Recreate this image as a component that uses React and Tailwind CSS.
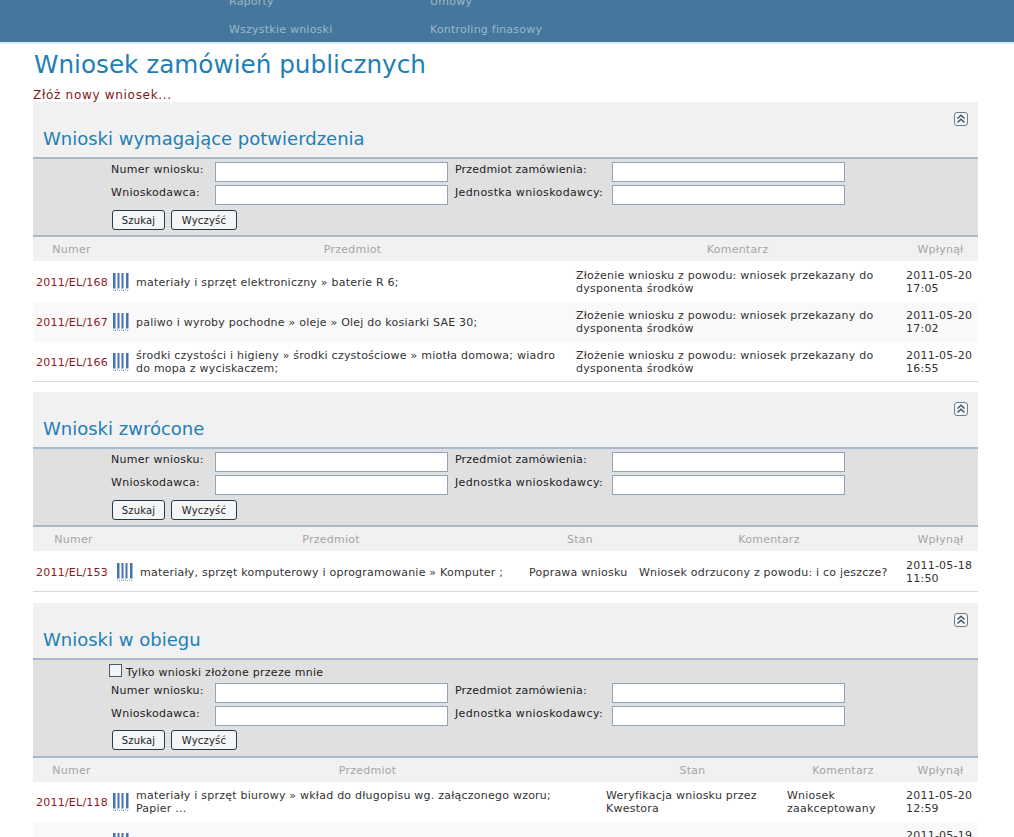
const FONT = "font-['DejaVu_Sans','Liberation_Sans',sans-serif]";

function Barcode() {
  return (
    <svg width="18" height="19" viewBox="0 0 18 19" className="block">
      <g fill="#4473b8">
        <rect x="1" y="0" width="2.5" height="15.5" />
        <rect x="5.5" y="0" width="2" height="15.5" />
        <rect x="9.5" y="0" width="2" height="15.5" />
        <rect x="14" y="0" width="2.5" height="15.5" />
      </g>
      <path d="M1 17h1M3 17.5h1M5 17h1M7 17.5h1M9 17h1M11 17.5h1M13 17h1M15 17.5h1" stroke="#6f8db8" strokeWidth="1" />
    </svg>
  );
}

function CollapseIcon() {
  return (
    <svg width="14" height="14" viewBox="0 0 14 14" className="block">
      <rect x="0.5" y="0.5" width="13" height="13" rx="2.5" fill="#f4f6f8" stroke="#6b7d8f" />
      <path d="M3.5 6.5 7 3.2l3.5 3.3M3.5 10.5 7 7.2l3.5 3.3" fill="none" stroke="#3e5064" strokeWidth="1.4" />
    </svg>
  );
}

const LABEL = "text-[11px] leading-[14px] text-[#222] whitespace-nowrap pt-px";
const INPUT = "h-[20px] w-[233px] bg-white border border-[#8ea4bd]";

function Filters({ check }) {
  return (
    <div className="bg-[#e0e0e1] border-t-2 border-b-2 border-[#a9bacd] pl-[78px]">
      {check && (
        <div className="flex items-center h-[20px] mt-[2px] text-[11px] leading-[14px] tracking-[0.28px] text-[#222] pt-px -ml-[2px]">
          <span className="w-[13px] h-[13px] border border-[#4a5b6c] bg-[#f2f4f6] mr-[4px] -mt-[4px]" />
          Tylko wnioski złożone przeze mnie
        </div>
      )}
      <div className={`grid grid-cols-[104px_233px_164px_233px] gap-y-[3px] ${check ? "mt-px" : "mt-[3px]"}`}>
        <span className={`${LABEL} tracking-[0.28px]`}>Numer wniosku:</span>
        <input className={INPUT} />
        <span className={`${LABEL} pl-[7px] tracking-[0.18px]`}>Przedmiot zamówienia:</span>
        <input className={INPUT} />
        <span className={`${LABEL} tracking-[0.28px]`}>Wnioskodawca:</span>
        <input className={INPUT} />
        <span className={`${LABEL} pl-[7px] tracking-[0.37px]`}>Jednostka wnioskodawcy:</span>
        <input className={INPUT} />
      </div>
      <div className={`flex gap-[6px] ml-[1px] ${check ? "mt-[4px] mb-[6px]" : "mt-[5px] mb-[5px]"}`}>
        <button className="w-[53px] h-[20px] rounded-[3px] border border-[#26384a] bg-[#f4f5f6] text-[10px] tracking-[0.2px] text-[#222]">Szukaj</button>
        <button className="w-[66px] h-[20px] rounded-[3px] border border-[#26384a] bg-[#f4f5f6] text-[10px] tracking-[0.2px] text-[#222]">Wyczyść</button>
      </div>
    </div>
  );
}

function Section({ title, check, grid, heads, rows, mb }) {
  return (
    <section className={`w-[945px] ml-[33px] ${mb}`}>
      <div className="h-[55px] bg-[#f1f1f2] relative">
        <div className="absolute right-[10px] top-[10px]"><CollapseIcon /></div>
        <h2 className="pt-[27px] pl-[10px] text-[18px] leading-[20px] text-[#1f7fb4]">{title}</h2>
      </div>
      <Filters check={check} />
      <div className={`grid ${grid} h-[24px] pt-[2px] items-center bg-[#f1f1f2] text-[11px] tracking-[0.23px] text-[#a5a5a5] text-center`}>
        {heads.map((h, i) => <span key={i}>{h}</span>)}
      </div>
      <div className={check ? "" : "pt-px"}>
        {rows.map((r, i) => (
          <div key={i} className={`grid ${grid} h-[40px] items-center text-[11px] leading-[13px] tracking-[0.23px] text-[#333] ${i % 2 ? "bg-[#f9f9f9]" : "bg-white"}`}>
            <span className="pl-[3px] text-[#8c1c1c]">{r[0]}</span>
            <span className="pl-[2px]"><Barcode /></span>
            {r.slice(1).map((c, j) => {
              const isDate = j === r.length - 2;
              return (
                <span key={j} className={j === 0 ? "pl-[3px] pr-[14px]" : isDate ? "pl-[3px]" : "pl-[4px] pr-[6px]"}>{c}</span>
              );
            })}
          </div>
        ))}
      </div>
      {mb !== "" && <div className="h-px bg-[#d8d9d9] -mt-px relative" />}
    </section>
  );
}

const FROM = "Złożenie wniosku z powodu: wniosek przekazany do dysponenta środków";

export default function App() {
  return (
    <div className={`h-[837px] overflow-hidden bg-white ${FONT}`}>
      <header className="h-[44px] bg-[#44779b] border-b-2 border-[#d9ecf7] overflow-hidden flex items-end">
        <nav className="ml-[229px] -mb-[2px] grid grid-cols-[201px_200px] auto-rows-[28px] items-center text-[11px] tracking-[0.23px] text-[#9db8cb]">
          <span>Raporty</span>
          <span>Umowy</span>
          <span>Wszystkie wnioski</span>
          <span>Kontroling finasowy</span>
        </nav>
      </header>
      <h1 className="ml-[34px] mt-[4px] text-[24.7px] leading-[34px] text-[#1f7fb4]">Wniosek zamówień publicznych</h1>
      <p className="ml-[33px] mt-[7px] text-[12px] leading-[13px] tracking-[0.7px] text-[#7f1717]">Złóż nowy wniosek...</p>
      <Section
        mb="mb-[10px]"
        title="Wnioski wymagające potwierdzenia"
        grid="grid-cols-[77px_23px_439px_331px_75px]"
        heads={["Numer", "", "Przedmiot", "Komentarz", "Wpłynął"]}
        rows={[
          ["2011/EL/168", "materiały i sprzęt elektroniczny » baterie R 6;", FROM, "2011-05-20 17:05"],
          ["2011/EL/167", "paliwo i wyroby pochodne » oleje » Olej do kosiarki SAE 30;", FROM, "2011-05-20 17:02"],
          ["2011/EL/166", "środki czystości i higieny » środki czystościowe » miotła domowa; wiadro do mopa z wyciskaczem;", FROM, "2011-05-20 16:55"],
        ]}
      />
      <Section
        mb="mb-[11px]"
        title="Wnioski zwrócone"
        grid="grid-cols-[81px_23px_388px_110px_268px_75px]"
        heads={["Numer", "", "Przedmiot", "Stan", "Komentarz", "Wpłynął"]}
        rows={[
          ["2011/EL/153", "materiały, sprzęt komputerowy i oprogramowanie » Komputer ;", "Poprawa wniosku", "Wniosek odrzucony z powodu: i co jeszcze?", "2011-05-18 11:50"],
        ]}
      />
      <Section
        check
        mb=""
        title="Wnioski w obiegu"
        grid="grid-cols-[77px_23px_469px_181px_120px_75px]"
        heads={["Numer", "", "Przedmiot", "Stan", "Komentarz", "Wpłynął"]}
        rows={[
          ["2011/EL/118", "materiały i sprzęt biurowy » wkład do długopisu wg. załączonego wzoru; Papier ...", "Weryfikacja wniosku przez Kwestora", "Wniosek zaakceptowany", "2011-05-20 12:59"],
          ["2011/EL/117", "materiały, sprzęt komputerowy i oprogramowanie » komputery » zestaw do", "Dział Kompetencyjny - Dział", "", "2011-05-19 10:00"],
        ]}
      />
    </div>
  );
}
